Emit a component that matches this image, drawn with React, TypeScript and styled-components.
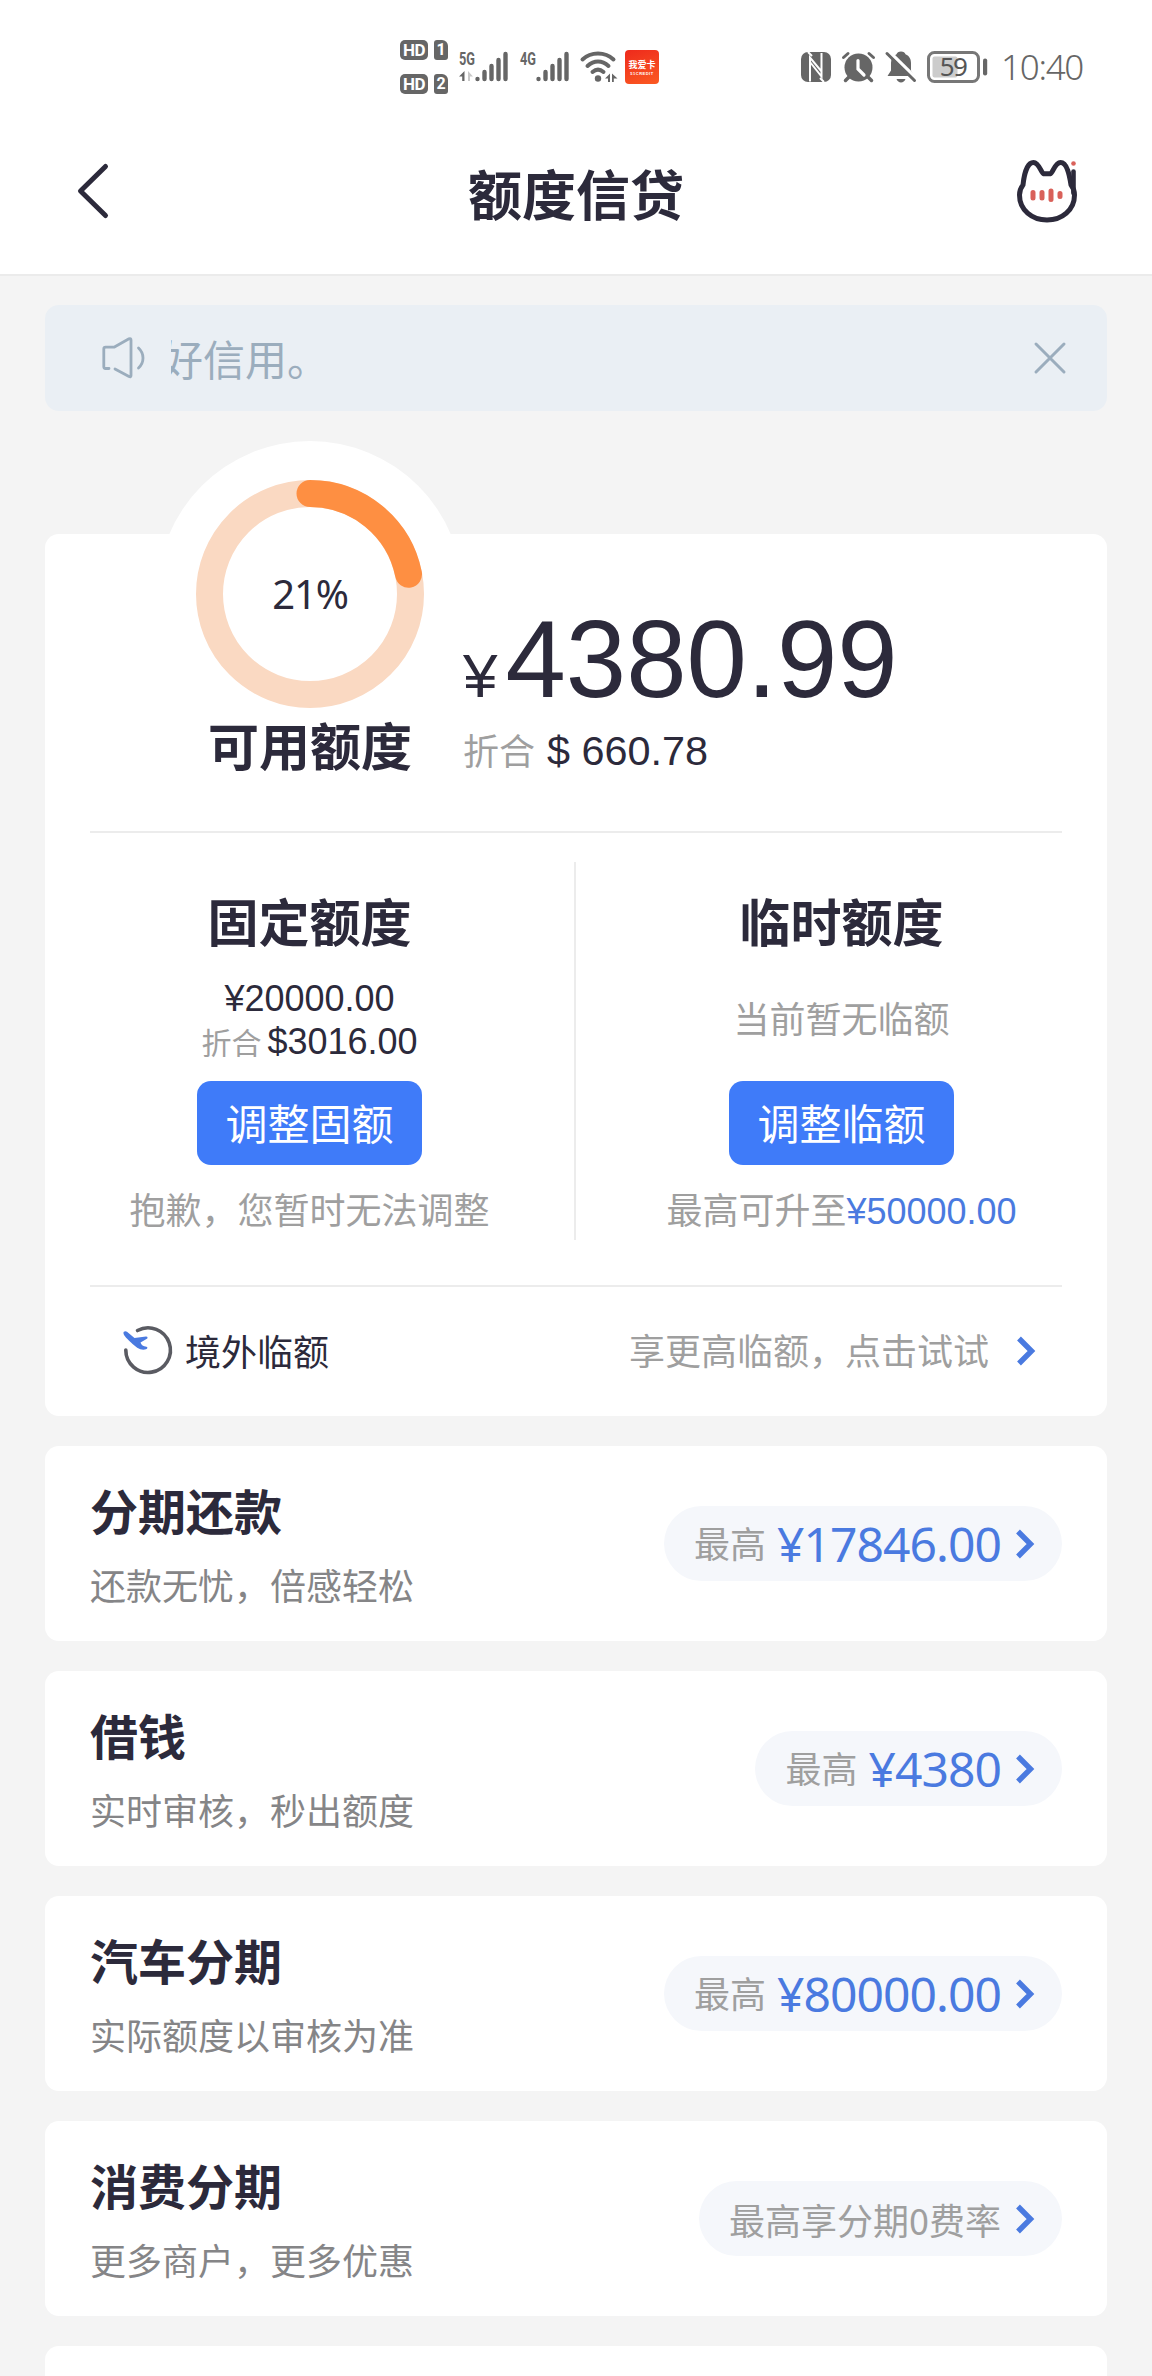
import React from 'react';
import styled, { createGlobalStyle } from 'styled-components';

const cjk = `"Noto Sans CJK SC", sans-serif`;
const arial = `"Liberation Sans", "Noto Sans CJK SC", sans-serif`;
const humanist = `"Noto Sans", "Noto Sans CJK SC", sans-serif`;

const ink = '#2c2a3b';
const blue = '#4a7ae0';
const grey = '#9f9f9f';

const GlobalStyle = createGlobalStyle`
  * { box-sizing: border-box; }
  body { margin: 0; background: #f4f4f4; font-family: ${cjk}; }
  svg { display: block; flex: none; overflow: visible; }
`;

const Screen = styled.div`
  width: 1152px;
  height: 2376px;
  overflow: hidden;
  display: flex;
  flex-direction: column;
  background: #f4f4f4;
`;

const StatusBar = styled.div`
  flex: none;
  height: 120px;
  padding: 14px 69px 0 400px;
  display: flex;
  align-items: center;
  justify-content: space-between;
  background: #fff;
  color: #666;
`;

const StatusGroup = styled.div<{ $gap: number }>`
  display: flex;
  align-items: center;
  gap: ${(p) => p.$gap}px;
`;

const SimColumn = styled.div`
  display: flex;
  flex-direction: column;
  gap: 14px;
`;

const SimRow = styled.div`
  display: flex;
  gap: 6px;
`;

const HdBadge = styled.span`
  width: 28px;
  height: 20px;
  border-radius: 5px;
  background: #666;
  color: #fff;
  font: 700 17px/20px Roboto, sans-serif;
  letter-spacing: -0.5px;
  text-align: center;
`;

const SimBadge = styled.span`
  width: 14px;
  height: 20px;
  border-radius: 3px 6px 3px 3px;
  background: #666;
  color: #fff;
  font: 700 16px/20px Roboto, sans-serif;
  text-align: center;
`;

const AppBadge = styled.span`
  width: 34px;
  height: 34px;
  margin-left: -5px;
  border-radius: 4px;
  background: linear-gradient(160deg, #ee2a1c, #fb5a22);
  color: #fff;
  display: flex;
  flex-direction: column;
  align-items: center;
  justify-content: center;
  font: 700 9px/13px ${cjk};
`;

const AppBadgeSub = styled.small`
  font: 700 4px/5px "Liberation Sans", sans-serif;
  letter-spacing: 0.5px;
`;

const Clock = styled.time`
  margin-left: 2px;
  font: 300 35px/48px ${humanist};
  letter-spacing: -1.3px;
`;

const Header = styled.header`
  flex: none;
  height: 156px;
  padding: 0 73px 12px 76px;
  border-bottom: 2px solid #ebebeb;
  background: #fff;
  display: grid;
  grid-template-columns: 70px 1fr 70px;
  align-items: center;
`;

const HeaderTitle = styled.h1`
  margin: 3px 3px 0 0;
  text-align: center;
  color: ${ink};
  font: 700 54px/64px ${cjk};
`;

const HeaderAction = styled.div`
  justify-self: end;
`;

const Notice = styled.div`
  flex: none;
  height: 106px;
  margin: 29px 45px 0;
  padding: 0 41px 0 56px;
  border-radius: 14px;
  background: #eaeff4;
  display: flex;
  align-items: center;
`;

const NoticeViewport = styled.div`
  flex: 1;
  margin-left: 25px;
  overflow: hidden;
`;

const NoticeText = styled.p`
  margin: 0 0 0 -10px;
  color: #9badbd;
  font: 400 42px/62px ${cjk};
`;

const QuotaCard = styled.section`
  flex: none;
  height: 882px;
  margin: 123px 45px 0;
  border-radius: 14px;
  background: #fff;
`;

const Summary = styled.div`
  height: 297px;
  padding-left: 112px;
  display: flex;
  align-items: flex-start;
`;

const Gauge = styled.div`
  width: 306px;
  margin-top: -93px;
  display: flex;
  flex-direction: column;
  align-items: center;
`;

const GaugeDial = styled.div`
  display: grid;
  height: 273px;
  > * { grid-area: 1 / 1; }
`;

const GaugeValue = styled.span`
  height: 306px;
  display: flex;
  align-items: center;
  justify-content: center;
  color: ${ink};
  font: 400 40px/1 ${humanist};
  letter-spacing: -1.2px;
`;

const BlockTitle = styled.h2`
  margin: 0;
  color: ${ink};
  font: 700 51px/60px ${cjk};
`;

const Available = styled.div`
  padding-top: 71px;
`;

const Amount = styled.div`
  height: 109px;
  color: ${ink};
  font: 400 108.5px/109px ${arial};
  white-space: nowrap;
`;

const AmountSign = styled.span`
  margin-right: 8px;
  font-size: 62px;
  line-height: 0;
`;

const Converted = styled.div<{ $size: number; $label: number; $line: number; $gap: number }>`
  display: flex;
  align-items: baseline;
  gap: ${(p) => p.$gap}px;
  color: ${ink};
  font: 400 ${(p) => p.$size}px/${(p) => p.$line}px ${arial};
  white-space: nowrap;
  > small {
    color: ${grey};
    font: 400 ${(p) => p.$label}px/${(p) => p.$line}px ${cjk};
  }
`;

const ConvertedOffset = styled.div`
  margin: 10px 0 0;
`;

const Rule = styled.hr`
  height: 2px;
  margin: 0 45px;
  border: 0;
  background: #ececec;
`;

const Quotas = styled.div`
  height: 452px;
  display: grid;
  grid-template-columns: 529px 2px 1fr;
`;

const QuotaDivider = styled.div`
  margin: 29px 0 45px;
  background: #ececec;
`;

const Quota = styled.div`
  padding-top: 57px;
  display: flex;
  flex-direction: column;
  align-items: center;
`;

const QuotaBody = styled.div<{ $lift?: number }>`
  height: 85px;
  margin-top: 28px;
  padding-bottom: ${(p) => p.$lift ?? 0}px;
  display: flex;
  flex-direction: column;
  align-items: center;
  justify-content: center;
`;

const QuotaAmount = styled.div`
  color: ${ink};
  font: 400 36px/42px ${arial};
`;

const Hint = styled.p`
  margin: 0;
  color: ${grey};
  font: 400 36px/50px ${cjk};
  white-space: nowrap;
`;

const QuotaHint = styled(Hint)`
  margin-top: 18px;
`;

const HintAmount = styled.span`
  color: ${blue};
  font-family: ${arial};
`;

const AdjustButton = styled.button`
  width: 225px;
  height: 84px;
  margin-top: 18px;
  padding: 0 0 3px;
  border: 0;
  border-radius: 14px;
  background: #3f7bf9;
  color: #fff;
  font: 400 42px/60px ${cjk};
`;

const OverseasRow = styled.div`
  height: 128px;
  padding: 0 71px 0 77px;
  display: flex;
  align-items: center;
`;

const OverseasLabel = styled.span`
  flex: 1;
  margin: -2px 0 0 15px;
  color: ${ink};
  font: 400 36px/54px ${cjk};
`;

const OverseasHint = styled(Hint)`
  margin: -5px 27px 0 0;
`;

const Services = styled.div`
  flex: none;
  padding: 30px 45px 0;
  display: flex;
  flex-direction: column;
  gap: 30px;
`;

const ServiceCard = styled.section`
  height: 195px;
  padding: 0 45px;
  border-radius: 14px;
  background: #fff;
  display: flex;
  align-items: center;
  justify-content: space-between;
`;

const ServiceCopy = styled.div`
  height: 129px;
  display: flex;
  flex-direction: column;
  justify-content: space-between;
`;

const ServiceTitle = styled.h3`
  margin: 0;
  color: ${ink};
  font: 700 48px/60px ${cjk};
`;

const ServiceNote = styled.p`
  margin: 0;
  color: #858587;
  font: 400 36px/47px ${cjk};
`;

const Pill = styled.div`
  height: 75px;
  padding: 0 27px 0 30px;
  border-radius: 38px;
  background: #f5f7fb;
  display: flex;
  align-items: center;
  white-space: nowrap;
`;

const PillLabel = styled.span<{ $wide?: boolean }>`
  margin-top: ${(p) => (p.$wide ? 0 : -4)}px;
  color: ${grey};
  font: 400 36px/54px ${cjk};
`;

const PillAmount = styled.span`
  margin-left: 11px;
  color: ${blue};
  font: 400 48px/66px ${humanist};
  letter-spacing: -0.95px;
`;

const PillArrow = styled.div`
  margin-left: 14px;
`;

const Chevron = () => (
  <svg width="20" height="30" viewBox="0 0 20 30" fill="none" stroke={blue} strokeWidth="5.4">
    <path d="M3 2.5 L15.5 15 L3 27.5" />
  </svg>
);

const Bars = () => (
  <g stroke="#666" strokeWidth="4.4" strokeLinecap="round">
    <path d="M2.5 28v0M9.5 21v7M16.5 15v13M23.5 9v19M30.5 3v25" />
  </g>
);

const Signal = ({ label, data }: { label: string; data?: boolean }) => (
  <svg width="50" height="32" viewBox="0 0 50 32">
    <text
      x="0"
      y="14"
      fill="#666"
      fontFamily="Roboto, sans-serif"
      fontSize="18"
      fontWeight="700"
      textLength="16"
      lengthAdjust="spacingAndGlyphs"
    >
      {label}
    </text>
    {data && <path d="M5.5 20v10H3.2v-4.5H0z" fill="#666" />}
    {data && <path d="M9 20v10h2v-4.5h3z" fill="#c9c9c9" />}
    <g transform="translate(16 0)">
      <Bars />
    </g>
  </svg>
);

const Wifi = () => (
  <svg width="38" height="32" viewBox="1 0 38 32" fill="none" stroke="#666" strokeWidth="4" strokeLinecap="round">
    <path d="M2.5 8.5C11 0.5 25 .5 33.5 8.5" />
    <path d="M7.5 15C14 9 22 9 28.5 15" />
    <path d="M12.5 21C16 18 20 18 23.5 21" />
    <circle cx="18" cy="27.5" r="3.2" fill="#666" stroke="none" />
    <path d="M30 22.500v8.500h-2v-3.500H25zM32 22.500v8.500h1.800v-3.500H37.500z" fill="#666" stroke="none" />
  </svg>
);

const Nfc = () => (
  <svg width="30" height="30" viewBox="0 0 30 30">
    <rect width="30" height="30" rx="7" fill="#666" />
    <path d="M9 29.5V5.5L20.5 19.5V1M20.5 1V24.500L9 10" fill="none" stroke="#fff" strokeWidth="2" />
    <path d="M7 0l4 4M19 26l4 4" stroke="#fff" strokeWidth="2" />
  </svg>
);

const Alarm = () => (
  <svg width="33" height="32" viewBox="0 0 33 32" fill="none" strokeLinecap="round">
    <circle cx="16.5" cy="16.5" r="14" fill="#666" />
    <path d="M1.5 6.5l4.5-4M31.5 6.5l-4.5-4" stroke="#666" strokeWidth="3" />
    <path d="M7 26l-3.5 3.5M26 26l3.5 3.5" stroke="#666" strokeWidth="3.5" />
    <path d="M16 9.5v8.5l6 6" stroke="#fff" strokeWidth="3.2" />
  </svg>
);

const BellOff = () => (
  <svg width="30" height="32" viewBox="0 0 30 32">
    <path
      d="M15 0.5c2.5 0 4 1.2 4.5 2.8C23.5 5 25 8.5 25 12v7.5l3.5 5.5H1.5L5 19.5V12c0-4 2-7.2 5.5-8.7C11 1.7 12.5.5 15 .5z"
      fill="#666"
    />
    <path d="M10.5 28h9c-.8 2.2-2.5 3.5-4.500 3.500S11.300 30.200 10.500 28z" fill="#666" />
    <path d="M3 .5l28 27.5" stroke="#fff" strokeWidth="3.5" />
    <path d="M1 2.5l27.500 27" stroke="#666" strokeWidth="3" strokeLinecap="round" />
  </svg>
);

const Battery = () => (
  <svg width="61" height="32" viewBox="0 0 61 32">
    <rect x="1.5" y="1.5" width="50" height="29" rx="6" fill="none" stroke="#777" strokeWidth="3" />
    <rect x="5.5" y="5.5" width="25" height="21" rx="2" fill="#ccc" />
    <rect x="56" y="7.5" width="4.2" height="17" rx="2" fill="#666" />
    <text x="26" y="25" fill="#555" fontFamily="Noto Sans, sans-serif" fontSize="26" textAnchor="middle" letterSpacing="-1.5">
      59
    </text>
  </svg>
);

const BackArrow = () => (
  <svg width="34" height="56" viewBox="0 0 34 56" fill="none" stroke={ink} strokeWidth="5" strokeLinecap="round" strokeLinejoin="round">
    <path d="M29.5 3.5L4.5 28L29.5 52.5" />
  </svg>
);

const CatMascot = () => (
  <svg width="63" height="64" viewBox="0 0 63 64" fill="none" strokeLinecap="round" strokeLinejoin="round">
    <path
      d="M7 26C8 16 11 3.500 17.500 3.500C23 3.500 25.500 14.500 27.500 14.800H34.500C36.500 14.500 39 3.500 44.500 3.500C51 3.500 53.500 16 55 26C57.500 29 58.500 32 58.500 36C58.500 51 46 61 31 61S3.500 51 3.500 36C3.500 32 4.500 29 7 26z"
      stroke={ink}
      strokeWidth="5"
    />
    <path d="M57.5 12.5V34" stroke={ink} strokeWidth="4.6" />
    <circle cx="57.5" cy="4.5" r="2.3" fill="#d9615a" />
    <g stroke="#d9615a" strokeWidth="5">
      <path d="M17 33.5v5.5M26 33.5v5.5M35 32v8.500M44 34.500v3" />
    </g>
  </svg>
);

const Speaker = () => (
  <svg width="45" height="42" viewBox="0 0 45 42" fill="none" stroke="#9badbd" strokeWidth="2.8" strokeLinecap="round" strokeLinejoin="round">
    <path d="M8 31.500H4.500Q2.800 31.500 2.800 29.800V12Q2.800 10.200 4.500 10.200H13L28 1.800Q30 1 30 3V38.500Q30 40.500 28 39.500L14 32" />
    <path d="M37.500 11C43.500 16.500 43.500 25.500 37.500 31" />
  </svg>
);

const Close = () => (
  <svg width="32" height="32" viewBox="0 0 32 32" stroke="#9badbd" strokeWidth="3" strokeLinecap="round">
    <path d="M2 2L30 30M30 2L2 30" />
  </svg>
);

const Dial = ({ percent }: { percent: number }) => {
  const radius = 100.5;
  const length = 2 * Math.PI * radius;
  return (
    <svg width="306" height="306" viewBox="0 0 306 306" fill="none">
      <circle cx="153" cy="153" r="153" fill="#fff" />
      <circle cx="153" cy="153" r={radius} stroke="#fad9c2" strokeWidth="27" />
      <circle
        cx="153"
        cy="153"
        r={radius}
        stroke="#fe8f42"
        strokeWidth="27"
        strokeLinecap="round"
        strokeDasharray={`${(length * percent) / 100} ${length}`}
        transform="rotate(-90 153 153)"
      />
    </svg>
  );
};

const PlaneOrbit = () => (
  <svg width="48" height="50" viewBox="0 1 48 50" fill="none" strokeLinecap="round">
    <path d="M15.5 5.5A22.3 22.300 0 1 1 3.800 25" stroke="#5a5b62" strokeWidth="3.600" />
    <path
      d="M1.500 8.500C1 6.500 3.500 5.500 5 6.800L12.500 13L24 11.500C26 11.500 26 13.500 24.500 14L18.500 17.500C19.500 20 21 21.500 24.500 21.800C26 22.200 25.500 24 24 24.300C19 26 14 22.500 9 17.500C5.500 14.200 2 11 1.500 8.500z"
      fill={blue}
    />
  </svg>
);

const services = [
  { title: '分期还款', note: '还款无忧，倍感轻松', label: '最高', amount: '¥17846.00' },
  { title: '借钱', note: '实时审核，秒出额度', label: '最高', amount: '¥4380' },
  { title: '汽车分期', note: '实际额度以审核为准', label: '最高', amount: '¥80000.00' },
  { title: '消费分期', note: '更多商户，更多优惠', label: '最高享分期0费率', amount: '' },
];

export default function App() {
  return (
    <Screen>
      <GlobalStyle />
      <StatusBar>
        <StatusGroup $gap={11}>
          <SimColumn>
            {['1', '2'].map((sim) => (
              <SimRow key={sim}>
                <HdBadge>HD</HdBadge>
                <SimBadge>{sim}</SimBadge>
              </SimRow>
            ))}
          </SimColumn>
          <Signal label="5G" data />
          <Signal label="4G" />
          <Wifi />
          <AppBadge>
            我爱卡
            <AppBadgeSub>51CREDIT</AppBadgeSub>
          </AppBadge>
        </StatusGroup>
        <StatusGroup $gap={11}>
          <Nfc />
          <Alarm />
          <BellOff />
          <Battery />
          <Clock>10:40</Clock>
        </StatusGroup>
      </StatusBar>

      <Header>
        <BackArrow />
        <HeaderTitle>额度信贷</HeaderTitle>
        <HeaderAction>
          <CatMascot />
        </HeaderAction>
      </Header>

      <Notice>
        <Speaker />
        <NoticeViewport>
          <NoticeText>好信用。</NoticeText>
        </NoticeViewport>
        <Close />
      </Notice>

      <QuotaCard>
        <Summary>
          <Gauge>
            <GaugeDial>
              <Dial percent={21.8} />
              <GaugeValue>21%</GaugeValue>
            </GaugeDial>
            <BlockTitle>可用额度</BlockTitle>
          </Gauge>
          <Available>
            <Amount>
              <AmountSign>¥</AmountSign>4380.99
            </Amount>
            <ConvertedOffset>
              <Converted $size={41.4} $label={36} $line={50} $gap={12}>
                <small>折合</small>$ 660.78
              </Converted>
            </ConvertedOffset>
          </Available>
        </Summary>
        <Rule />
        <Quotas>
          <Quota>
            <BlockTitle>固定额度</BlockTitle>
            <QuotaBody>
              <QuotaAmount>¥20000.00</QuotaAmount>
              <Converted $size={36} $label={30} $line={42} $gap={6}>
                <small>折合</small>$3016.00
              </Converted>
            </QuotaBody>
            <AdjustButton>调整固额</AdjustButton>
            <QuotaHint>抱歉，您暂时无法调整</QuotaHint>
          </Quota>
          <QuotaDivider />
          <Quota>
            <BlockTitle>临时额度</BlockTitle>
            <QuotaBody $lift={7}>
              <Hint>当前暂无临额</Hint>
            </QuotaBody>
            <AdjustButton>调整临额</AdjustButton>
            <QuotaHint>
              最高可升至<HintAmount>¥50000.00</HintAmount>
            </QuotaHint>
          </Quota>
        </Quotas>
        <Rule />
        <OverseasRow>
          <PlaneOrbit />
          <OverseasLabel>境外临额</OverseasLabel>
          <OverseasHint>享更高临额，点击试试</OverseasHint>
          <Chevron />
        </OverseasRow>
      </QuotaCard>

      <Services>
        {services.map((s) => (
          <ServiceCard key={s.title}>
            <ServiceCopy>
              <ServiceTitle>{s.title}</ServiceTitle>
              <ServiceNote>{s.note}</ServiceNote>
            </ServiceCopy>
            <Pill>
              <PillLabel $wide={!s.amount}>{s.label}</PillLabel>
              {s.amount && <PillAmount>{s.amount}</PillAmount>}
              <PillArrow>
                <Chevron />
              </PillArrow>
            </Pill>
          </ServiceCard>
        ))}
        <ServiceCard />
      </Services>
    </Screen>
  );
}
